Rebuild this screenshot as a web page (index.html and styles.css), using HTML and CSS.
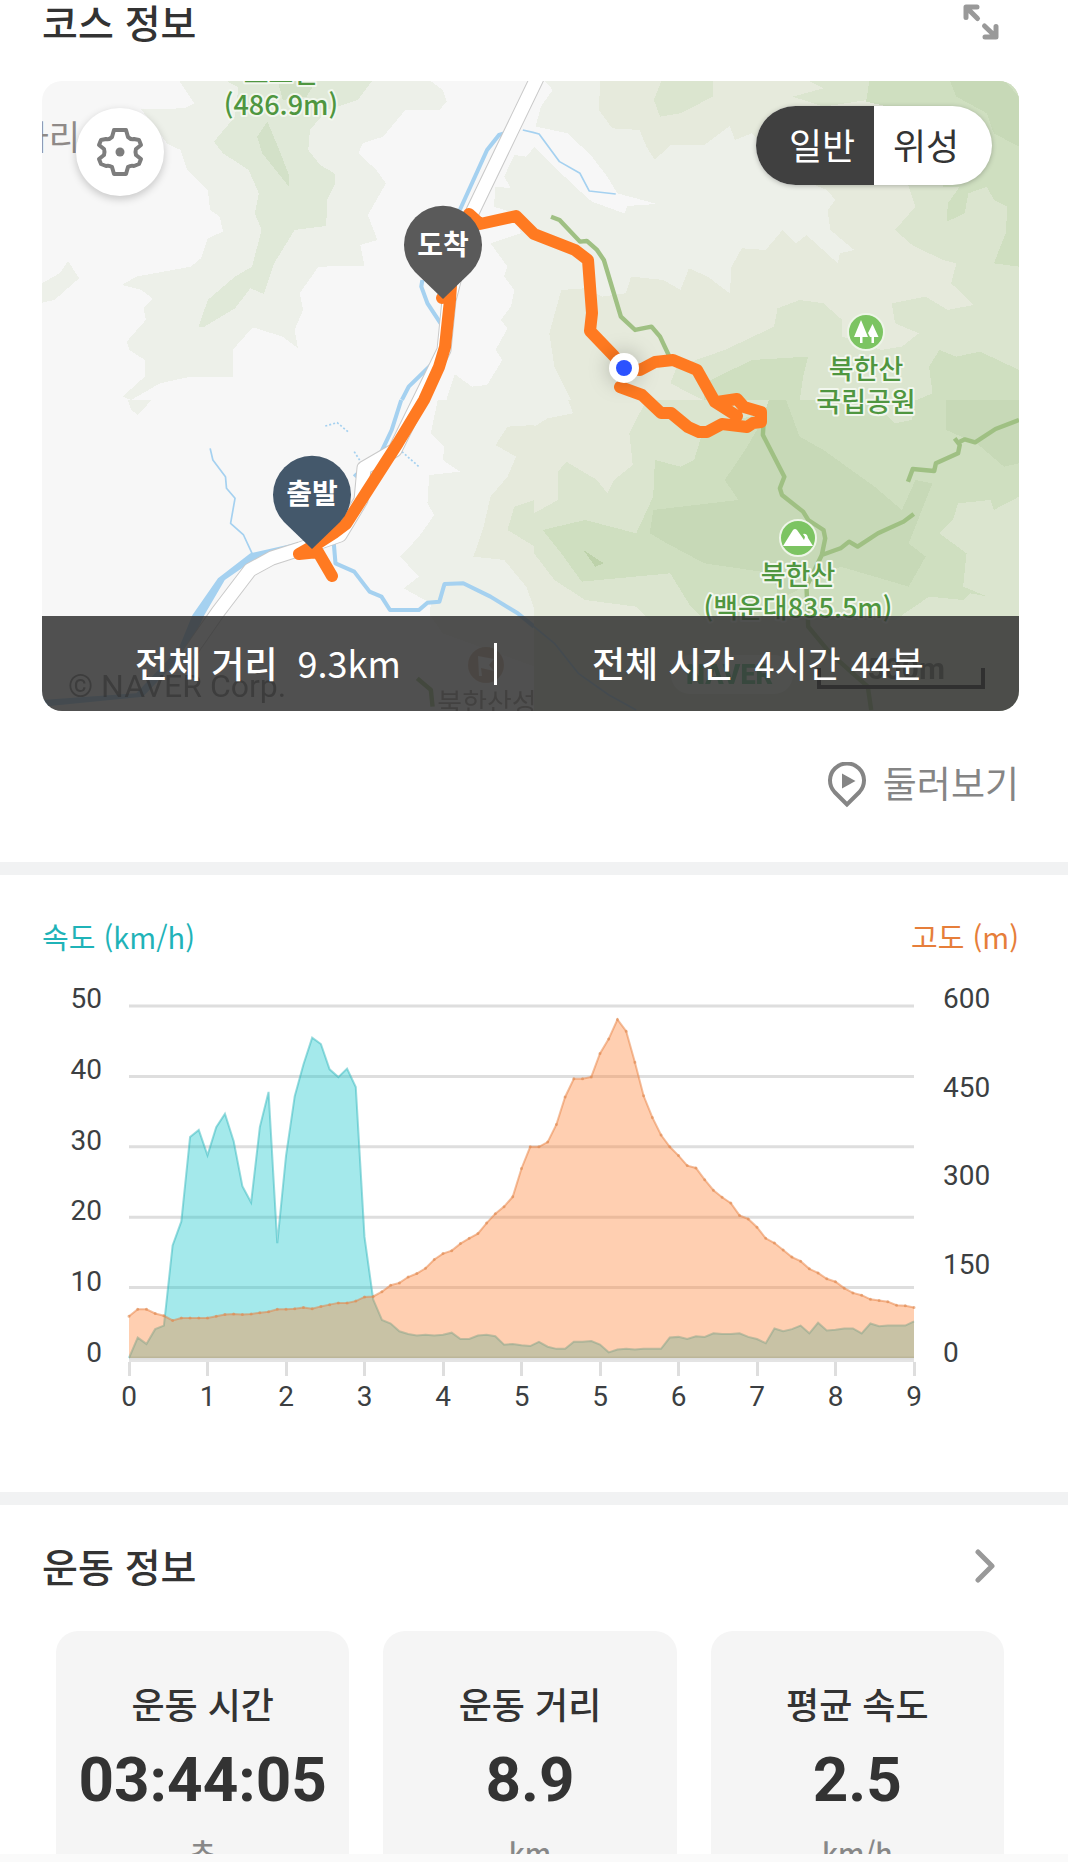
FILE: index.html
```
<!DOCTYPE html>
<html lang="ko">
<head>
    <meta charset="UTF-8">
    <meta name="viewport" content="width=device-width, initial-scale=1.0">
    <title>코스 정보</title>
    <link rel="stylesheet" href="styles.css">
</head>
<body>
    <main class="page">
        <section class="course">
            <header class="section-header">
                <h2>코스 정보</h2>
                <button class="icon-button" aria-label="전체 화면">
                    <svg width="36" height="36" viewBox="0 0 36 36" fill="none" stroke="#999" stroke-width="5" stroke-linecap="round" stroke-linejoin="round">
                        <path d="M3 13.500V3h11M4 4l10.500 10.500M33 22.500V33h-11M32 32L21.500 22"/>
                    </svg>
                </button>
            </header>

            <div class="map">
                <svg class="map-canvas" viewBox="42 81 977 630">
                    <rect x="42" y="81" width="977" height="630" fill="#f7f7f7"/>

                    <!-- terrain and water, one group per map tile -->
                    <g transform="scale(.3406 .3333)">
                        <g shape-rendering="crispEdges">
                            <path fill="#edf0e9" d="M525 240L570 310L540 325L415 328L490 430L530 450L550 510L610 570L617 630L645 650L655 695L610 715L590 775L560 800L400 830L358 855L415 870L448 895L422 925L428 960L372 1025L380 1050L425 1080L425 1130L360 1190L385 1200L470 1150L560 1130L685 1130L683 1050L742 982L830 1010L875 1045L865 990L890 930L880 880L935 800L1070 798L1058 735L1108 720L1080 645L1133 550L1105 510L1052 460L1065 430L1125 410L1190 330L1290 330L1312 305L1300 270L1260 240Z"/>
                            <path fill="#e0e9d8" d="M660 240L700 262L690 350L628 425L655 460L730 510L760 580L748 640L768 690L740 800L690 830L610 900L583 980L600 980L690 925L735 865L775 882L805 790L865 690L958 678L960 600L985 550L982 520L940 495L905 450L910 390L960 330L1050 300L1095 240Z"/>
                            <path fill="#d3e1c8" d="M785 365L755 410L770 460L848 560L850 530L820 450ZM815 240L830 300L900 290L930 240Z"/>
                            <path fill="#edf0e9" d="M123 850L175 820L200 783L232 835L160 900L123 908ZM1570 440L1545 470L1510 465L1480 530L1500 565L1455 560L1450 620L1510 640L1530 700L1440 730L1490 800L1480 830L1510 870L1500 920L1470 960L1490 985L1455 1050L1475 1080L1430 1155L1385 1160L1335 1122L1310 1202L1570 1202Z"/>
                        </g>
                        <path class="water" d="M1480 400L1465 405L1430 450L1390 540L1350 630M1240 840L1237 860L1255 910L1300 980M1300 1050L1270 1090L1200 1160L1180 1200"/>
                        <path class="water thin" d="M1535 390L1568 398"/>
                    </g>
                    <g transform="translate(534 0) scale(.3406 .3333)">
                        <g shape-rendering="crispEdges">
                            <path fill="#edf0e9" d="M0 240H1424V1202H0Z"/>
                            <path fill="#f7f7f7" d="M0 240H30L55 270L20 320L5 380L100 400L170 470L215 530L245 580L360 612L275 618L265 640L170 605L120 560L0 440Z"/>
                            <path fill="#e6eadc" d="M195 240L190 330L230 385L310 390L330 440L355 480L400 435L500 435L575 378L590 420L640 400L740 520L860 570L885 600L862 630L870 690L940 750L898 760L892 790L800 705L770 730L730 690L680 750L610 745L580 800L575 880L510 830L455 805L430 870L380 840L285 830L270 880L200 890L150 865L80 870L45 1000L60 1100L110 1202H1424V240Z"/>
                            <path fill="#edf0e9" d="M0 1100L60 1130L110 1202H0Z"/>
                            <path fill="#dbe5cf" d="M375 240L352 300L370 350L430 340L525 290L525 240ZM985 240L978 300L850 320L760 290L850 265L800 240ZM1100 560L1120 620L1060 690L1110 735L1200 780L1240 790L1225 850L1290 915L1215 930L1150 890L1050 910L1060 970L1130 1000L1080 1040L1020 1050L905 1010L905 960L850 910L780 900L715 925L705 980L560 1050L420 1100L400 1150L500 1202H1424V240H985L1035 315Z"/>
                            <path fill="#cfdfc0" d="M985 240L975 305L1040 320L1160 330L1200 560L1250 560L1215 610L1212 665L1265 640L1275 580L1330 560L1350 600L1390 620L1385 700L1350 790L1424 800V240ZM1190 1050L1160 1100L1170 1180L1120 1202H1424V1110L1310 1055L1240 1070ZM500 1150L640 1080L805 1070L790 1130L780 1202H500Z"/>
                            <path fill="#c7d9b7" d="M1220 240L1240 290L1330 340L1350 400L1424 440V290L1380 240Z"/>
                        </g>
                        <path class="water thin" d="M0 398L15 402L75 485L135 520L162 573L240 582"/>
                        <path class="trail" d="M50 650L75 660L135 725L155 723L185 750L205 780L255 950L297 990L345 980L370 1010L400 1075"/>
                    </g>
                    <g transform="translate(0 400) scale(.3406 .3333)">
                        <g shape-rendering="crispEdges">
                            <path fill="#edf0e9" d="M1285 0L1265 100L1305 140L1300 180L1350 215L1260 225L1255 310L1275 345L1230 410L1175 470L1230 530L1185 565L1265 610L1262 645L1300 700L1570 800V0ZM375 0L385 30L405 45L445 0Z"/>
                            <path fill="#e6eadc" d="M1570 75L1490 80L1455 135L1515 170L1490 230L1440 290L1420 380L1390 470L1480 480L1545 560L1570 630Z"/>
                            <path fill="#dbe5cf" d="M1570 300L1510 320L1490 390L1570 440Z"/>
                        </g>
                        <path fill="#a5d1f0" d="M885 425L735 460L640 535L565 645L525 745L400 880L123 900V920L420 890L555 745L600 645L660 540L745 480L885 440Z"/>
                        <path class="water" d="M1178 0L1150 90L1120 155L1040 230M980 430L985 490L1040 515L1085 575L1120 590L1145 630L1230 630L1255 608L1290 605L1305 552L1360 550L1440 590L1520 640L1568 680"/>
                        <path class="water thin" d="M617 145L625 180L662 230L665 265L690 295L677 370L715 405L740 460"/>
                        <path class="water thin" stroke-dasharray="6 6" d="M955 78L990 68L1025 98M1040 155L1065 195M1180 155L1230 200"/>
                        <path class="trail" d="M1225 835L1265 870L1270 920"/>
                    </g>
                    <g transform="translate(534 400) scale(.3406 .3333)">
                        <g shape-rendering="crispEdges">
                            <path fill="#dbe5cf" d="M0 0H1424V935H0Z"/>
                            <path fill="#e6eadc" d="M0 0H330L300 60L280 100L290 195L235 240L215 280L185 240L95 185L70 215V300L0 340ZM0 460L60 540L150 600L300 620L340 660H0Z"/>
                            <path fill="#edf0e9" d="M0 0H100L115 40L40 55L0 80Z"/>
                            <path fill="#cfdfc0" d="M500 80L470 180L430 200L355 180L350 290L300 400L150 360L25 390L80 460L140 545L400 520L460 620L500 660H1060L1160 590L1260 600L1280 580L1390 600V400L1424 300V0H700L680 40Z"/>
                            <path fill="#dbe5cf" d="M1424 290L1350 330L1340 300L1245 310L1230 360L1190 400L1270 460L1260 560L1380 610L1424 560ZM990 0L1060 70L1110 60L1120 0Z"/>
                            <path fill="#c7d9b7" d="M620 150L560 240L600 300L350 330L340 400L390 430L500 490L700 520L720 600L900 500L1100 560L1150 470L1100 430L1170 250L1120 240L1080 330L1000 260L850 150L780 110L740 0H690L660 80ZM1210 0H1424V190L1380 200L1300 130L1210 90Z"/>
                            <path fill="#bdd2aa" d="M145 450L205 490L180 500Z"/>
                        </g>
                        <path class="trail" d="M675 50L672 105L735 230L722 265L728 285L790 335L805 360L850 390L855 415L845 465L900 445L925 425L950 440L1010 400L1085 365L1115 342M1098 245L1112 207L1175 213L1180 190L1245 160L1250 135L1235 115M1250 125L1265 118L1295 127L1355 87L1424 60M845 465L800 560L805 680L870 760L980 860L990 930"/>
                        <path class="water thin" d="M0 680L60 730L130 820L220 885L300 930"/>
                    </g>

                    <!-- main road -->
                    <g fill="none" stroke-linejoin="round">
                        <path stroke="#c9c9c9" stroke-width="15" d="M539 74L471 215L449 300L444 350L395 450L364 468L361 500L340 535L300 549L272 558L250 570L218 612L188 655"/>
                        <path stroke="#fff" stroke-width="13" d="M539 74L471 215L449 300L444 350L395 450L364 468L361 500L340 535L300 549L272 558L250 570L218 612L188 655"/>
                    </g>

                    <!-- recorded track -->
                    <path class="track" d="M332 576L318 552L299 554L320 542L334 533L346 524L398 443L424 400L439 367L445 347L450 300L451 285M442 298L448 292M469 214L480 224L516 216L534 234L575 250L588 260L592 313L590 331L614 356L624 368L640 370L655 362L673 360L697 370L715 402L737 416M717 402L737 399L744 407L761 412V422L753 423L747 427L722 424L707 432H699L688 427L671 413H661L642 395L620 387"/>
                    <circle class="glow" cx="624" cy="368" r="15" fill="#fff"/>
                    <circle cx="624" cy="368" r="8" fill="#2b52ff"/>

                    <!-- places -->
                    <g class="place" text-anchor="middle">
                        <text x="281" y="83">노고산</text>
                        <text x="281" y="115">(486.9m)</text>
                        <text x="866" y="379">북한산</text>
                        <text x="866" y="412">국립공원</text>
                        <text x="798" y="585">북한산</text>
                        <text x="798" y="618">(백운대835.5m)</text>
                    </g>
                    <text class="town" x="80" y="150" text-anchor="end">사리</text>
                    <g transform="translate(866 332)">
                        <circle r="18" fill="#7cc462" stroke="#eef5e8" stroke-width="2"/>
                        <path fill="#fff" d="M-5-12L-12 5H-6V11H-3.500V5H2ZM6.500-8L2 1L4 5H5.500V11H8V5H12.500Z"/>
                    </g>
                    <g transform="translate(798 538)">
                        <circle r="18" fill="#7cc462" stroke="#eef5e8" stroke-width="2"/>
                        <path fill="#fff" d="M-15 8L-5-8Q-3-10-1-8L4-1L6 2L7-1L5-4Q9-5 10 0L15 8Z"/>
                    </g>
                    <g opacity=".6">
                        <g transform="translate(486 665)">
                            <circle r="18" fill="#b98d6a"/>
                            <path fill="#fff" d="M-8-9L8-6L3 0L8 6L-5 3L-4 11H-7Z"/>
                        </g>
                        <text class="fort" x="487" y="713" text-anchor="middle">북한산성</text>
                        <text class="copyright" x="68" y="697">© NAVER Corp.</text>
                        <rect x="671" y="655" width="122" height="39" rx="19" fill="#fff"/>
                        <text class="naver" x="686" y="684">NAVER</text>
                        <text class="scale" x="945" y="679" text-anchor="end">500m</text>
                    </g>
                    <path fill="none" stroke="#222" stroke-width="4" d="M819 668V687H983V668"/>

                    <!-- start and finish pins -->
                    <g text-anchor="middle">
                        <path fill="#5a5a5a" d="M443 299L415 272A39 39 0 1 1 471 272Z"/>
                        <text class="pin-label" x="443" y="255">도착</text>
                        <path fill="#44586b" d="M312 549L284 522A39 39 0 1 1 340 522Z"/>
                        <text class="pin-label" x="312" y="504">출발</text>
                    </g>
                </svg>

                <button class="map-settings" aria-label="지도 설정">
                    <svg width="48" height="50" viewBox="-24 -25 48 50" fill="none" stroke="#7d7d7d" stroke-width="4" stroke-linejoin="round">
                        <path d="M-6-22H6L8-15Q11-12 14-13L19-12L21-7L16-3Q15 0 16 3L21 7L19 12L14 14Q11 13 8 15L6 22H-6L-8 15Q-11 13-14 14L-19 12L-21 7L-16 3Q-15 0-16-3L-21-7L-19-12L-14-13Q-11-12-8-15Z"/>
                        <circle r="4.500" fill="#7d7d7d" stroke="none"/>
                    </svg>
                </button>

                <div class="map-type">
                    <button class="active">일반</button>
                    <button>위성</button>
                </div>

                <div class="map-summary">
                    <p class="distance"><strong>전체 거리</strong><span>9.3km</span></p>
                    <p class="duration"><strong>전체 시간</strong><span>4시간 44분</span></p>
                </div>
            </div>

            <div class="course-actions">
                <button class="explore">
                    <svg width="40" height="46" viewBox="0 0 40 46">
                        <path fill="none" stroke="#858585" stroke-width="4" d="M20 42.500L7.500 30A17 17 0 1 1 32.500 30Z"/>
                        <path fill="#858585" d="M15 11.500V26.500L28.500 19Z"/>
                    </svg>
                    <span>둘러보기</span>
                </button>
            </div>
        </section>

        <section class="chart-section">
            <div class="legend">
                <span class="speed">속도 (km/h)</span>
                <span class="altitude">고도 (m)</span>
            </div>
            <div class="chart">
                <ul class="y-labels left">
                    <li>50</li><li>40</li><li>30</li><li>20</li><li>10</li><li>0</li>
                </ul>
                <div class="plot">
                    <svg id="plot" viewBox="0 0 90 50" preserveAspectRatio="none"></svg>
                    <ol class="x-labels">
                        <li>0</li><li>1</li><li>2</li><li>3</li><li>4</li><li>5</li><li>5</li><li>6</li><li>7</li><li>8</li><li>9</li>
                    </ol>
                </div>
                <ul class="y-labels right">
                    <li>600</li><li>450</li><li>300</li><li>150</li><li>0</li>
                </ul>
            </div>
        </section>

        <section class="workout">
            <header class="section-header">
                <h2>운동 정보</h2>
                <button class="icon-button" aria-label="더보기">
                    <svg width="24" height="36" viewBox="0 0 24 36" fill="none" stroke="#999" stroke-width="5" stroke-linecap="round" stroke-linejoin="round">
                        <path d="M3 4l14 14L3 32"/>
                    </svg>
                </button>
            </header>
            <div class="cards">
                <div class="card"><h3>운동 시간</h3><p class="value">03:44:05</p><p class="unit">초</p></div>
                <div class="card"><h3>운동 거리</h3><p class="value">8.9</p><p class="unit">km</p></div>
                <div class="card"><h3>평균 속도</h3><p class="value">2.5</p><p class="unit">km/h</p></div>
            </div>
        </section>
    </main>
    <footer class="bottom-edge"></footer>

    <script src="app.js"></script>
</body>
</html>
```

FILE: styles.css
```
body {
    margin: 0;
    background-color: #fff;
    color: #333;
    font-family: "Noto Sans CJK KR", "Noto Sans", sans-serif;
}
h2, h3, p, ul, ol {
    margin: 0;
    padding: 0;
    list-style: none;
}
button {
    padding: 0;
    border: none;
    background: none;
    color: inherit;
    font-family: inherit;
    cursor: pointer;
}
svg { display: block; }
.page {
    height: 100vh;
    overflow: hidden;
}
.section-header {
    display: flex;
    justify-content: space-between;
    align-items: center;
    height: 44px;
    padding-right: 20px;
}
.section-header h2 {
    padding-bottom: 2px;
    font-size: 39px;
    font-weight: 500;
    line-height: 42px;
}

/* course map */
.course {
    padding: 0 49px 0 42px;
    border-bottom: 13px solid #f1f2f3;
}
.map {
    position: relative;
    margin-top: 37px;
    border-radius: 20px;
    overflow: hidden;
}
.map-canvas {
    width: 100%;
    height: auto;
}
.water {
    fill: none;
    stroke: #a5d1f0;
    stroke-width: 12;
    stroke-linejoin: round;
}
.water.thin { stroke-width: 5; }
.trail {
    fill: none;
    stroke: #9fc083;
    stroke-width: 13;
    stroke-linejoin: round;
}
.track {
    fill: none;
    stroke: #ff7a21;
    stroke-width: 12;
    stroke-linecap: round;
    stroke-linejoin: round;
}
.glow { filter: drop-shadow(0 0 10px rgba(0, 0, 0, 0.25)); }
.place {
    fill: #4f9640;
    font-size: 27px;
    font-weight: 500;
    stroke: #f2f7ee;
    stroke-width: 4px;
    stroke-linejoin: round;
    paint-order: stroke;
}
.town {
    fill: #8f8a88;
    font-size: 34px;
}
.fort {
    fill: #5c5148;
    font-size: 27px;
}
.copyright {
    fill: #222;
    font-family: Roboto, sans-serif;
    font-size: 32px;
}
.naver {
    fill: #00a651;
    font-family: Roboto, sans-serif;
    font-size: 27px;
    font-weight: 900;
}
.scale {
    fill: #222;
    font-family: Roboto, sans-serif;
    font-size: 30px;
    font-weight: 700;
}
.pin-label {
    fill: #fff;
    font-size: 28px;
    font-weight: 700;
}
.map-settings {
    position: absolute;
    top: 27px;
    left: 34px;
    display: flex;
    align-items: center;
    justify-content: center;
    width: 88px;
    height: 88px;
    border-radius: 50%;
    background-color: #fff;
    box-shadow: 0 3px 8px rgba(0, 0, 0, 0.2);
}
.map-type {
    position: absolute;
    top: 25px;
    right: 27px;
    display: flex;
    border-radius: 40px;
    overflow: hidden;
    background-color: #fff;
    box-shadow: 0 1px 5px rgba(0, 0, 0, 0.25);
}
.map-type button {
    width: 118px;
    height: 79px;
    padding: 0 14px 4px 0;
    font-size: 36px;
}
.map-type .active {
    padding: 0 0 4px 14px;
    background-color: #404040;
    color: #fff;
}
.map-summary {
    position: absolute;
    right: 0;
    bottom: 0;
    left: 0;
    display: flex;
    align-items: center;
    height: 95px;
    background-color: rgba(51, 51, 51, 0.85);
    color: #fff;
    font-size: 36px;
}
.map-summary p {
    display: flex;
    justify-content: center;
    gap: 20px;
    padding-bottom: 4px;
    line-height: 38px;
}
.map-summary strong { font-weight: 500; }
.distance {
    flex: 45;
    border-right: 3px solid #fff;
}
.duration { flex: 52; }
.course-actions {
    display: flex;
    justify-content: flex-end;
    padding: 47px 0 50px;
}
.explore {
    display: flex;
    align-items: center;
    gap: 16px;
    height: 54px;
    color: #858585;
    font-size: 37px;
    line-height: 48px;
}
.explore span { padding-bottom: 6px; }

/* speed and altitude chart */
.chart-section {
    padding: 41px 49px 74px 42px;
    border-bottom: 13px solid #f1f2f3;
}
.legend {
    display: flex;
    justify-content: space-between;
    font-size: 29px;
    line-height: 40px;
}
.legend .speed { color: #1fb3b8; }
.legend .altitude { color: #e67e3a; }
.chart {
    display: flex;
    margin-top: 25px;
    color: #3c3f42;
    font-family: Roboto, sans-serif;
    font-size: 28px;
}
.y-labels {
    display: flex;
    flex-direction: column;
    justify-content: space-between;
    height: 390px;
    line-height: 36px;
}
.y-labels.left {
    width: 60px;
    text-align: right;
}
.y-labels.right { width: 76px; }
.plot {
    flex: 1;
    margin: 25px 29px 0 27px;
}
.plot svg {
    width: 100%;
    height: 352px;
    overflow: visible;
}
.plot line {
    stroke: #dedede;
    stroke-width: 3px;
    vector-effect: non-scaling-stroke;
}
.plot polygon { fill-opacity: 0.4; }
.plot polyline {
    fill: none;
    stroke-width: 2px;
    stroke-opacity: 0.5;
    vector-effect: non-scaling-stroke;
}
.plot .dots {
    fill: none;
    stroke: #e08a52;
    stroke-width: 3px;
    stroke-linecap: round;
    stroke-opacity: 0.6;
    vector-effect: non-scaling-stroke;
}
.speed-area { fill: #1cc8ce; }
.speed-line { stroke: #35b8bd; }
.altitude-area { fill: #ff873b; }
.altitude-line { stroke: #e8803f; }
.x-labels {
    display: flex;
    justify-content: space-between;
    margin-top: 1px;
    border-top: 3px solid #e4e4e4;
}
.x-labels li {
    display: flex;
    flex-direction: column;
    align-items: center;
    width: 0;
    line-height: 42px;
}
.x-labels li::before {
    content: "";
    width: 3px;
    height: 14px;
    background-color: #dedede;
}

/* workout cards */
.workout { padding: 39px 49px 0 42px; }
.cards {
    display: flex;
    gap: 34px;
    margin: 43px 15px 0 14px;
}
.card {
    flex: 1;
    height: 300px;
    padding-top: 45px;
    border-radius: 22px;
    background-color: #f5f5f5;
    text-align: center;
}
.card h3 {
    font-size: 36px;
    font-weight: 500;
    line-height: 54px;
}
.value {
    font-family: Roboto, sans-serif;
    font-size: 62px;
    font-weight: 700;
    line-height: 100px;
}
.unit {
    color: #888;
    font-size: 28px;
    font-weight: 500;
    line-height: 44px;
}
.bottom-edge {
    position: fixed;
    right: 0;
    bottom: 0;
    left: 0;
    height: 8px;
    background-color: #fafafa;
}
```

FILE: app.js
```
// 91 samples each, one every 100m
const speed = [
    0, 2.9, 2, 4.1, 4.6, 16, 19.4, 31.4, 32.4, 28.8, 32.8, 34.7, 30.8, 24.4, 22.1,
    32.8, 37.8, 16.3, 28.7, 37.2, 41.7, 45.5, 44.6, 41, 39.9, 41.1, 38.5, 17.2, 8.3, 5.4,
    4.9, 3.8, 3.4, 3.2, 3.3, 3.2, 3.3, 3.6, 2.7, 2.7, 3.2, 3.3, 3.1, 1.9, 2,
    1.8, 1.7, 2.3, 1.6, 1.3, 1.3, 2.3, 2.3, 2.4, 1.9, 0.8, 1.2, 1.3, 1.2, 1.3,
    1.3, 1.3, 2.9, 3, 2.7, 3.1, 3, 3.5, 3.4, 3.4, 3.5, 3, 2.7, 2.1, 4.2,
    3.8, 4.1, 4.6, 3.5, 5, 3.9, 4, 4.2, 4.2, 3.5, 4.9, 4.5, 4.6, 4.6, 4.6, 5.2
];
const altitude = [
    71, 83, 83, 76, 72, 64, 68, 68, 68, 68, 71, 74, 75, 74, 75,
    77, 79, 83, 83, 84, 86, 84, 88, 91, 94, 94, 97, 104, 105, 113,
    124, 128, 138, 144, 153, 168, 178, 183, 195, 204, 212, 230, 246, 258, 275,
    323, 360, 360, 368, 398, 445, 476, 476, 479, 519, 544, 577, 557, 504, 447,
    410, 380, 360, 345, 328, 324, 304, 286, 274, 264, 243, 237, 223, 204, 196,
    184, 172, 165, 152, 145, 135, 130, 119, 111, 107, 100, 98, 96, 90, 89, 86
];

const plot = document.getElementById('plot');

function add(tag, attrs) {
    const el = document.createElementNS('http://www.w3.org/2000/svg', tag);
    for (const key in attrs) el.setAttribute(key, attrs[key]);
    plot.appendChild(el);
}

function toPoints(values, max) {
    return values.map((v, i) => i + ',' + (50 - v / max * 50).toFixed(2));
}

function drawSeries(name, values, max) {
    const points = toPoints(values, max).join(' ');
    add('polygon', { class: name + '-area', points: '0,50 ' + points + ' 90,50' });
    add('polyline', { class: name + '-line', points: points });
}

for (let y = 0; y <= 50; y += 10) {
    add('line', { x1: 0, x2: 90, y1: y, y2: y });
}
drawSeries('speed', speed, 50);
drawSeries('altitude', altitude, 600);
add('path', { class: 'dots', d: toPoints(altitude, 600).map(p => 'M' + p + 'h0').join('') });
```
